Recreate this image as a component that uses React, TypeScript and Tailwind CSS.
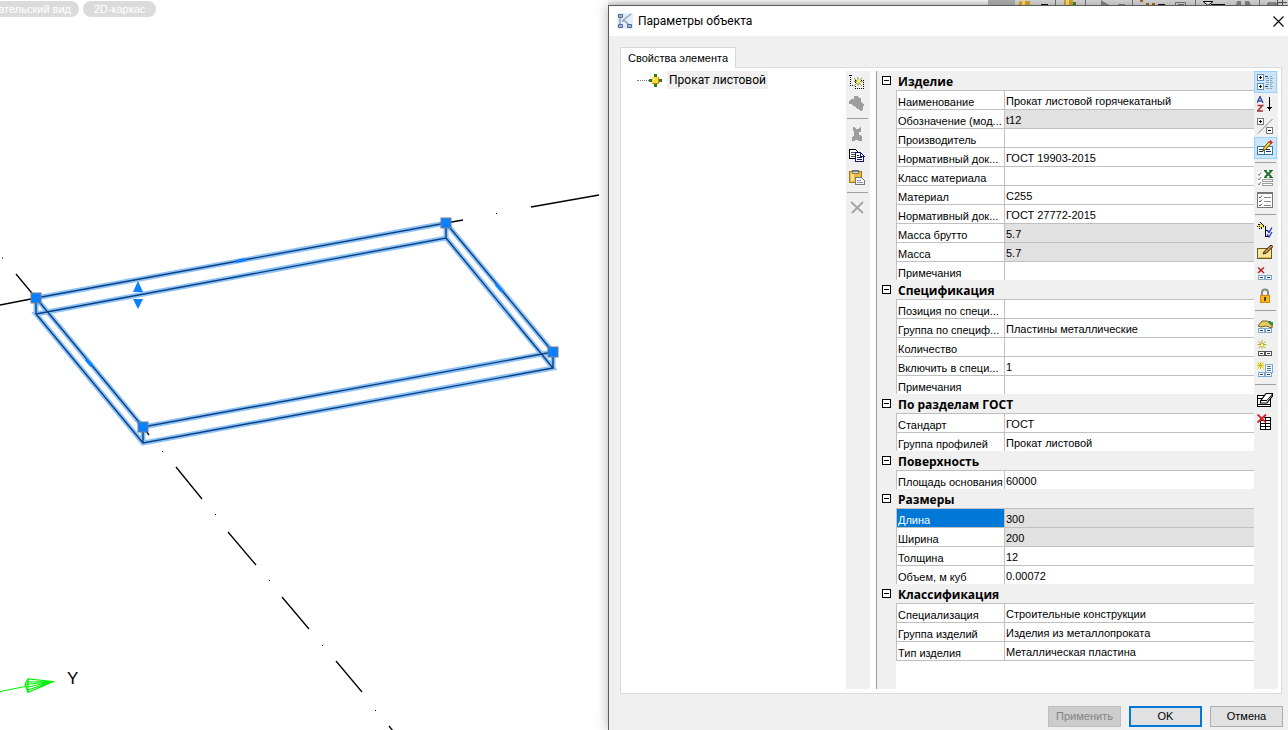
import { useState, type ReactNode } from "react";
import { clsx } from "clsx";

type Row = { label: string; value: string; locked?: boolean };
type Group = { title: string; rows: Row[] };

const groups: Group[] = [
  {
    title: "Изделие",
    rows: [
      { label: "Наименование", value: "Прокат листовой горячекатаный" },
      { label: "Обозначение (мод...", value: "t12", locked: true },
      { label: "Производитель", value: "" },
      { label: "Нормативный док...", value: "ГОСТ 19903-2015" },
      { label: "Класс материала", value: "" },
      { label: "Материал", value: "С255" },
      { label: "Нормативный док...", value: "ГОСТ 27772-2015" },
      { label: "Масса брутто", value: "5.7", locked: true },
      { label: "Масса", value: "5.7", locked: true },
      { label: "Примечания", value: "" },
    ],
  },
  {
    title: "Спецификация",
    rows: [
      { label: "Позиция по специ...", value: "" },
      { label: "Группа по специф...", value: "Пластины металлические" },
      { label: "Количество", value: "" },
      { label: "Включить в специ...", value: "1" },
      { label: "Примечания", value: "" },
    ],
  },
  {
    title: "По разделам ГОСТ",
    rows: [
      { label: "Стандарт", value: "ГОСТ" },
      { label: "Группа профилей", value: "Прокат листовой" },
    ],
  },
  {
    title: "Поверхность",
    rows: [{ label: "Площадь основания", value: "60000" }],
  },
  {
    title: "Размеры",
    rows: [
      { label: "Длина", value: "300", locked: true },
      { label: "Ширина", value: "200", locked: true },
      { label: "Толщина", value: "12" },
      { label: "Объем, м куб", value: "0.00072" },
    ],
  },
  {
    title: "Классификация",
    rows: [
      { label: "Специализация", value: "Строительные конструкции" },
      { label: "Группа изделий", value: "Изделия из металлопроката" },
      { label: "Тип изделия", value: "Металлическая пластина" },
    ],
  },
];

function Icon({ children }: { children: ReactNode }) {
  return (
    <svg width="16" height="16" viewBox="0 0 16 16" shapeRendering="crispEdges" fill="none" aria-hidden="true">
      {children}
    </svg>
  );
}

// pair of small property cells shared by several icons
function Cells({ y, color = "#7fa8cf" }: { y: number; color?: string }) {
  return (
    <>
      <path d={`M1 ${y}h14v5h-14z`} fill="#fff" />
      <path d={`M1.5 ${y + 0.5}h6v4h-6zM8.5 ${y + 0.5}h6v4h-6z`} stroke={color} />
      <path d={`M3 ${y + 2.5}h3M10 ${y + 2.5}h3`} stroke="#1c3f7a" />
    </>
  );
}

const icons = {
  categories: (
    <Icon>
      <rect x="0.5" y="0.5" width="6" height="6" rx="1" fill="#fff" stroke="#5f8fbd" />
      <rect x="0.5" y="9.5" width="6" height="6" rx="1" fill="#fff" stroke="#5f8fbd" />
      <path d="M2 3.5h3M3.5 2v3M2 12.5h3M3.5 11v3" stroke="#000" />
      <path d="M8 2.5h3M8 12.5h3" stroke="#33475c" />
      <path
        d="M9 4.5h3M9 6.5h3M9 8.5h3M9 10.5h3M9 14.5h3M13 2.5h2M13 4.5h3M13 6.5h2M13 8.5h3M13 10.5h2M13 12.5h3M13 14.5h2"
        stroke="#8fa3b5"
      />
    </Icon>
  ),
  sort: (
    <Icon>
      <path d="M0 7L3 0.5L6 7M1 5h4" stroke="#3a4fa8" shapeRendering="auto" strokeWidth="1.4" />
      <path d="M0.5 9.500h5L0.500 15h5.500" stroke="#a03028" shapeRendering="auto" strokeWidth="1.500" />
      <path d="M12.500 1v13" stroke="#000" />
      <path d="M10 11h5v1h-1v1h-1v2h-1v-2h-1v-1h-1z" fill="#000" />
    </Icon>
  ),
  expand: (
    <Icon>
      <rect x="0.5" y="0.5" width="6" height="6" rx="1" fill="#fff" stroke="#777" />
      <rect x="9.5" y="9.5" width="6" height="6" rx="1" fill="#fff" stroke="#777" />
      <path d="M2 3.5h3M3.5 2v3M11 12.5h3" stroke="#000" />
      <path d="M1 15.500L15.500 1" stroke="#888" shapeRendering="auto" />
    </Icon>
  ),
  edit: (
    <Icon>
      <path d="M0.5 6.5h7v8h-7zM7.5 6.5h8v8h-8z" fill="#fff" stroke="#2f7cab" />
      <path d="M2 9.5h4M2 11.5h4M9 9.5h4M9 11.5h5" stroke="#17324a" />
      <path d="M6 11l1-3.500L12 1.500l2 2-5.500 6z" fill="#ffd93b" stroke="#6b4a00" shapeRendering="auto" />
      <path d="M11 2l2-2 3 2-2 2z" fill="#d63a2c" />
    </Icon>
  ),
  checkExport: (
    <Icon>
      <path d="M0 2h9v14h-9z" fill="#fff" />
      <path d="M1 4l1 1.500 2-3M1 8.500l1 1.500 2-3M1 13.500l1 1.500 2-3" stroke="#777" shapeRendering="auto" />
      <path d="M5.500 9.500h10v2h-10zM5.500 13.500h10v2h-10z" fill="#fff" stroke="#9d9d9d" />
      <path d="M8 1l6.500 6M14.500 1l-6.500 6" stroke="#1f6b2d" strokeWidth="1.800" shapeRendering="auto" />
      <path d="M7 0.500h3M12 0.500h4M7 7.500h3M12 7.500h4" stroke="#1f6b2d" />
    </Icon>
  ),
  checkList: (
    <Icon>
      <path d="M0.5 0.500h15v15h-15z" fill="#fff" stroke="#777" />
      <path d="M1 1.500h14" stroke="#777" />
      <path d="M2 5l1 1 2-2.500M2 9l1 1 2-2.500M2 13l1 1 2-2.500" stroke="#555" shapeRendering="auto" />
      <path d="M7 5.500h7M7 9.500h7M7 13.500h7" stroke="#8a8a8a" />
    </Icon>
  ),
  addTree: (
    <Icon>
      <path d="M2.500 0.500h2v2h2v2h-2v2h-2v-2h-2v-2h2z" fill="#f2de3c" stroke="#000" strokeDasharray="1 1" />
      <path d="M8.500 4v10.500h2M8.500 8.500h2" stroke="#000" />
      <path d="M10 8l2 2.500 3-5M10 12.500l2 2.500 3-5" stroke="#2535b5" strokeWidth="1.300" shapeRendering="auto" />
    </Icon>
  ),
  note: (
    <Icon>
      <path d="M0.500 4.500h14v10h-14z" fill="#f8e597" stroke="#6b5a22" />
      <path d="M2 13.500h12" stroke="#d9b94f" />
      <path d="M6 10l1.500-3L14 1l2 1.500-6.500 6.500z" fill="#c98c4c" stroke="#30220f" shapeRendering="auto" />
    </Icon>
  ),
  removeCell: (
    <Icon>
      <path d="M1 1.500l6 5.500M7 1.500l-6 5.500" stroke="#b5232b" strokeWidth="1.600" shapeRendering="auto" />
      <Cells y={9} />
    </Icon>
  ),
  lock: (
    <Icon>
      <path d="M5 8V4.500c0-4 6-4 6 0V8" stroke="#8b8b8b" strokeWidth="2" shapeRendering="auto" />
      <path d="M3.500 7.500h9v7h-9z" fill="#f6b91c" stroke="#d2860d" />
      <path d="M7 9h2v4H7z" fill="#5b3900" />
    </Icon>
  ),
  pick: (
    <Icon>
      <path d="M1 8l4-5h5l5 2v5l-6-2-5 1z" fill="#e8ca63" stroke="#77612a" shapeRendering="auto" />
      <path d="M11 3l5 1v4l-4-2z" fill="#3f8c45" />
      <Cells y={10} />
    </Icon>
  ),
  newCell: (
    <Icon>
      <path d="M5 0v9M0.500 4.500h9M1.500 1.500l7 6.500M8.500 1.500l-7 6.500" stroke="#b9a81d" shapeRendering="auto" />
      <path d="M4 3.500h2v2H4z" fill="#fff79b" />
      <Cells y={11} color="#555" />
    </Icon>
  ),
  newGroup: (
    <Icon>
      <path d="M8.500 2.500h7v8h-7z" fill="#fff" stroke="#7fa8cf" />
      <path d="M10 4.500h4M10 6.500h4M10 8.500h4" stroke="#3d72ad" />
      <path d="M0 0h7v7H0z" fill="#f8f3b4" />
      <path d="M3.500 0v7M0 3.500h7M0.500 0.500l6 6M6.500 0.500l-6 6" stroke="#d6c02a" shapeRendering="auto" />
      <Cells y={10} />
    </Icon>
  ),
  erase: (
    <Icon>
      <path d="M0.500 3.500h13v11h-13z" fill="#fff" stroke="#000" />
      <path d="M1 6.500h12M1 12.500h12" stroke="#000" />
      <path d="M3.500 9L9 1.500h6.500V4L10 11H3.500z" fill="#fff" stroke="#000" strokeWidth="1.200" shapeRendering="auto" />
      <path d="M3.500 8.500H10L15.500 2" stroke="#000" shapeRendering="auto" />
    </Icon>
  ),
  removeTable: (
    <Icon>
      <path d="M3.500 3.500h10v12h-10z" fill="#fff" stroke="#000" />
      <path d="M3 6.500h10M3 9.500h10M3 12.500h10M8.500 4v11" stroke="#000" />
      <path d="M0.500 0.500l8.500 8M9 0.500l-8.500 8" stroke="#d8232a" strokeWidth="1.800" shapeRendering="auto" />
    </Icon>
  ),
  selectNew: (
    <Icon>
      <path d="M1.500 1v12M0 1.500h4M3 11.500h3M6.500 6v9M6 14.500h9M14.500 6v9M6 6.500h9" stroke="#000" strokeDasharray="1 1" />
      <path d="M5 4l8 8M13 4l-8 8M9 3v9M5 7.500h9" stroke="#9b9b3a" shapeRendering="auto" />
      <path d="M8 6h3v3H8z" fill="#f5ee63" />
    </Icon>
  ),
  shape: (
    <Icon>
      <path d="M5 0h3l2 2h2v4l3 2v1l-1 1v3l-2 2h-1l-2-2H8l-2-3H4L2 8H0V5l3-2h2z" fill="#9d9d9d" />
    </Icon>
  ),
  cut: (
    <Icon>
      <path d="M4 1h2l1 2h2l2-2h1v5h-2v3h2l1 2v4H9v-1H6v1H3v-4l2-2V6L4 4z" fill="#9d9d9d" />
    </Icon>
  ),
  copy: (
    <Icon>
      <path d="M0.500 1.500h6l2 2v7h-8z" fill="#fff" stroke="#000" />
      <path d="M2 4.500h4M2 6.500h4M2 8.500h4" stroke="#555" />
      <path d="M6.500 4.500h5l3 3v6h-8z" fill="#fff" stroke="#14146e" />
      <path d="M11.500 4v4h4" stroke="#14146e" />
      <path d="M8 7.500h2M8 9.500h5M8 11.500h5" stroke="#14146e" />
    </Icon>
  ),
  paste: (
    <Icon>
      <path d="M0.500 1.500h12v11h-12z" fill="#f0bb36" stroke="#a8741a" />
      <path d="M2 3h3v8H2z" fill="#ffe08a" />
      <path d="M3 0h7v4H3z" fill="#777" />
      <path d="M4 2h5v1H4z" fill="#e8e8e8" />
      <path d="M6.500 7.500h6l3 3v4h-9z" fill="#f7f8fb" stroke="#6f7785" />
      <path d="M8 10.500h4M8 12.500h6" stroke="#8d99ad" />
    </Icon>
  ),
  remove: (
    <Icon>
      <path d="M2 2l12 11M14 2L3 13" stroke="#a3a3a3" strokeWidth="1.800" shapeRendering="auto" />
    </Icon>
  ),
};

type Tool = { icon: keyof typeof icons; label: string; active?: boolean };

const treeTools: Tool[][] = [
  [
    { icon: "selectNew", label: "Создать" },
    { icon: "shape", label: "Деталь" },
  ],
  [
    { icon: "cut", label: "Вырезать" },
    { icon: "copy", label: "Копировать" },
    { icon: "paste", label: "Вставить" },
  ],
  [{ icon: "remove", label: "Удалить" }],
];

const gridTools: Tool[][] = [
  [
    { icon: "categories", label: "По категориям", active: true },
    { icon: "sort", label: "По алфавиту" },
    { icon: "expand", label: "Развернуть" },
    { icon: "edit", label: "Редактировать", active: true },
  ],
  [
    { icon: "checkExport", label: "Экспорт" },
    { icon: "checkList", label: "Список" },
  ],
  [
    { icon: "addTree", label: "Добавить" },
    { icon: "note", label: "Изменить" },
    { icon: "removeCell", label: "Удалить свойство" },
    { icon: "lock", label: "Блокировка" },
  ],
  [
    { icon: "pick", label: "Выбрать" },
    { icon: "newCell", label: "Новое свойство" },
    { icon: "newGroup", label: "Новая группа" },
  ],
  [
    { icon: "erase", label: "Очистить" },
    { icon: "removeTable", label: "Удалить таблицу" },
  ],
];

function ToolStrip({ sections }: { sections: Tool[][] }) {
  return (
    <div className="flex w-6 shrink-0 flex-col bg-[#f0f0f0]">
      {sections.map((tools, i) => (
        <div key={i} className="flex flex-col">
          {i > 0 && <hr className="mt-[3px] mr-0.5 mb-1 ml-px h-0 border-t border-[#a0a0a0]" />}
          {tools.map((tool) => (
            <button
              key={tool.icon}
              aria-label={tool.label}
              className={clsx(
                "flex h-[22px] w-[23px] items-center justify-center pr-px",
                tool.active && "border border-[#99d1ff] bg-[#cce4f7]",
              )}
            >
              {icons[tool.icon]}
            </button>
          ))}
        </div>
      ))}
    </div>
  );
}

function PropertyGroup({ group, id }: { group: Group; id: number }) {
  const [open, setOpen] = useState(true);

  return (
    <tbody>
      <tr>
        <td className="h-[19px] bg-[#f0f0f0] p-0">
          <button
            aria-label={group.title}
            aria-expanded={open}
            onClick={() => setOpen(!open)}
            className="ml-[5px] flex size-[9px] items-center justify-center border border-black bg-white"
          >
            <span className="h-px w-[5px] bg-black" />
          </button>
        </td>
        <th
          colSpan={2}
          className="h-[19px] bg-[#f0f0f0] p-0 pt-0.5 pl-0.5 text-left font-['Open_Sans',sans-serif] text-xs leading-4 font-bold"
        >
          {group.title}
        </th>
      </tr>
      {open &&
        group.rows.map((row, i) => {
          const selected = row.label === "Длина";
          return (
            <tr key={i}>
              <td className="h-[19px] bg-[#f0f0f0] p-0" />
              <td
                className={clsx(
                  "h-[19px] border-t border-l border-[#c0c0c0] p-0 pt-1 pl-px",
                  selected ? "bg-[#0078d7] text-white" : "bg-white",
                )}
              >
                <label htmlFor={`p${id}-${i}`} className="block overflow-hidden leading-[14px] whitespace-nowrap">
                  {row.label}
                </label>
              </td>
              <td
                className={clsx(
                  "h-[19px] border-t border-l border-[#c0c0c0] p-0 pt-0.5 pl-px",
                  row.locked ? "bg-[#e1e1e1]" : "bg-white",
                )}
              >
                <input
                  id={`p${id}-${i}`}
                  defaultValue={row.value}
                  readOnly={row.locked}
                  className="block h-4 w-full bg-transparent leading-4 outline-none"
                />
              </td>
            </tr>
          );
        })}
    </tbody>
  );
}

function Grip({ x, y }: { x: number; y: number }) {
  return <rect x={x - 5} y={y - 5} width="10" height="10" fill="#0a80ff" stroke="#6f7f92" />;
}

const platePath =
  "M36 298L446 223L553 352L143 427ZM36 314L446 238L553 368L143 443ZM36 298V314M446 223V238M553 352V368M143 427V443";

function Viewport() {
  return (
    <main className="flex min-w-0 flex-1 flex-col overflow-hidden">
      <div className="-mb-[17px] flex h-[17px] gap-1 pt-px text-[11px] leading-4 whitespace-nowrap text-white">
        <button
          aria-label="Пользовательский вид"
          className="flex w-[79px] justify-end rounded-r-full bg-[#dbdbdb] pr-2"
        >
          ательский вид
        </button>
        <button className="w-[73px] rounded-full bg-[#dbdbdb]">2D-каркас</button>
      </div>
      <svg width="608" height="730" viewBox="0 0 608 730" fill="none" className="shrink-0">
        <g stroke="#000" strokeWidth="1.3">
          <path d="M0 305L36 298M16 274L36 298M446 223L463 220M531 207L599 195M143 427L149 435" />
          <path d="M176 467L202 499M228 532L256 565M282 597L309 629M336 661L362 692M389 726L393 731" />
        </g>
        <path
          d="M2 258h1M496 213.5h1M162 451.5h1M215 514.5h1M269 580.5h1M322 645.5h1M375 710.5h1"
          stroke="#000"
        />
        <path d={platePath} stroke="#8cc2f7" strokeWidth="5" />
        <path d={platePath} stroke="#0b3f80" strokeWidth="1.4" />
        <path d="M236 261.5L246 259.5M86 359L92 366M496 284L502 291" stroke="#0a80ff" strokeWidth="3" />
        <path d="M138 281l5 11h-10zM138 309l5-10h-10z" fill="#0a80ff" />
        <Grip x={36} y={298} />
        <Grip x={446} y={223} />
        <Grip x={553} y={352} />
        <Grip x={143} y={427} />
        <g stroke="#00f000" strokeWidth="1.2">
          <path d="M0 691.5L28 686" />
          <path d="M53 681.5L28 679L25 684.5L28 692.5ZM53 681.5L25 684.5M53 681.5L28 687M28 679V692M53 681.5L27 682M53 681.5L28 690" />
        </g>
        <text x="67" y="684" fontSize="17" fill="#000" className="font-['Liberation_Sans',sans-serif]">
          Y
        </text>
      </svg>
    </main>
  );
}

// lower edge of the main window's toolbar that stays visible above the dialog
function ToolbarEdge() {
  return (
    <div className="flex h-[5px] shrink-0 justify-end overflow-hidden">
      <div className="flex-1 bg-gradient-to-b from-white to-[#e4e4e4]" />
      <svg width="300" height="5" viewBox="0 0 300 5" fill="none" aria-hidden="true">
        <path d="M0 0h300v5H0z" fill="#dcdcdc" />
        <path d="M0 0h27v5H0z" fill="#b4b4b4" />
        <path d="M67.5 0v5M97.5 0v5M144.5 0v5M207.5 0v5M271.5 0v5" stroke="#777" />
        <path d="M32 1h10v4H30zM76 0h9v5h-9z" fill="#e0a82c" />
        <path d="M34 0h3v5h-3zM78 0h3v5h-3z" fill="#ffe48a" />
        <path d="M85 2h3v3h-3z" fill="#3b8a3b" />
        <path d="M53 4h7v1h-7zM170 4h7v1h-7zM223 4h14v1h-14z" fill="#111" />
        <path d="M113 0l8 5h-8zM130 4h7v1h-7z" fill="#888" />
        <path d="M152 0h3v2h-3zM158 3h3v2h-3zM164 3h3v2h-3z" fill="#b06a12" />
        <path d="M187.5 2.5h10v3h-10zM190 4.5h6" stroke="#777" />
        <path d="M215 1.5h10l-5 4z" stroke="#111" fill="#fff" />
        <path d="M249 1h4v4h-5zM257 1h4l2 4h-6z" fill="#888" />
        <path d="M280 3h8v2h-8zM289.5 0v5M289 2.5h10M294.5 0v5" stroke="#555" />
      </svg>
    </div>
  );
}

export default function App() {
  return (
    <div className="flex h-screen overflow-hidden bg-white font-['Liberation_Sans',sans-serif] text-[11px] text-black">
      <Viewport />
      <div className="flex w-[680px] shrink-0 flex-col">
        <ToolbarEdge />
        <section
          aria-label="Параметры объекта"
          className="flex min-h-0 flex-1 flex-col border-t border-l border-[#5c5c5c] bg-[#f0f0f0] shadow-[0_0_12px_rgba(0,0,0,0.3)]"
        >
          <header className="flex h-[30px] shrink-0 items-center bg-white pr-1 pl-2">
            <svg width="16" height="16" viewBox="0 0 16 16" fill="none" aria-hidden="true">
              <path d="M0 0h16v16H0z" fill="#e3edf7" />
              <path d="M3 4v8M5 8l9-7M5 8h3l5 5" stroke="#8ba3bd" strokeWidth="1.5" />
              <path d="M1.500 1.500h4v3h-4zM1.500 11.500h4v3h-4zM10.500 11.500h4v3h-4z" fill="#a3b2cf" stroke="#566c98" />
            </svg>
            <h1 className="ml-[5px] flex-1 font-['Roboto',sans-serif] text-xs">Параметры объекта</h1>
            <button aria-label="Закрыть" className="flex size-3 items-center justify-center">
              <svg width="11" height="11" viewBox="0 0 11 11" aria-hidden="true">
                <path d="M0.5 0.5l10 10M10.5 0.5l-10 10" stroke="#000" strokeWidth="1.1" />
              </svg>
            </button>
          </header>

          <div className="flex min-h-0 flex-1 flex-col pt-[11px] pr-[6px] pl-[11px]">
            <div role="tablist" className="z-10 -mb-px flex">
              <button
                role="tab"
                aria-selected="true"
                className="h-[21px] w-[116px] border border-b-0 border-[#d9d9d9] bg-white"
              >
                Свойства элемента
              </button>
            </div>
            <div className="flex min-h-0 flex-1 border border-[#dcdcdc] bg-white pt-[3px] pr-[3px] pb-1">
              <div role="tree" className="flex-1">
                <div role="treeitem" aria-selected="true" className="flex h-[18px] items-center pl-4">
                  <span className="w-3 border-t border-dotted border-[#808080]" />
                  <svg width="13" height="13" viewBox="0 0 13 13" shapeRendering="crispEdges" aria-hidden="true">
                    <path d="M5 0h3v3H5zM5 10h3v3H5zM0 5h3v3H0zM10 5h3v3h-3z" fill="#2d7a1f" />
                    <path d="M3 3h7v7H3z" fill="#c98a10" />
                    <path d="M3 3h6v6H3z" fill="#ffd83a" />
                    <path d="M4 4h2v2H4z" fill="#fff6b0" />
                  </svg>
                  <span className="ml-[5px] bg-[#f0f0f0] px-0.5 font-['Roboto',sans-serif] text-xs leading-[18px]">
                    Прокат листовой
                  </span>
                </div>
              </div>
              <ToolStrip sections={treeTools} />
              <div className="ml-[6px] w-[378px] shrink-0 overflow-hidden border-l border-[#a0a0a0] bg-[linear-gradient(to_right,#f0f0f0_19px,white_19px)]">
                <table className="w-full table-fixed border-separate border-spacing-0">
                  <colgroup>
                    <col className="w-[19px]" />
                    <col className="w-[108px]" />
                    <col />
                  </colgroup>
                  {groups.map((group, i) => (
                    <PropertyGroup key={group.title} group={group} id={i} />
                  ))}
                  <tfoot>
                    <tr>
                      <td className="p-0" />
                      <td colSpan={2} className="border-t border-[#c0c0c0] p-0" />
                    </tr>
                  </tfoot>
                </table>
              </div>
              <ToolStrip sections={gridTools} />
            </div>
          </div>

          <footer className="flex h-9 shrink-0 items-start justify-end gap-2 pt-3 pr-[5px]">
            <button disabled className="h-[21px] w-[73px] border border-[#bfbfbf] bg-[#cccccc] text-[#838383]">
              Применить
            </button>
            <button className="h-[21px] w-[73px] border-2 border-[#0078d7] bg-[#e1e1e1]">OK</button>
            <button className="h-[21px] w-[73px] border border-[#adadad] bg-[#e1e1e1]">Отмена</button>
          </footer>
        </section>
      </div>
    </div>
  );
}
